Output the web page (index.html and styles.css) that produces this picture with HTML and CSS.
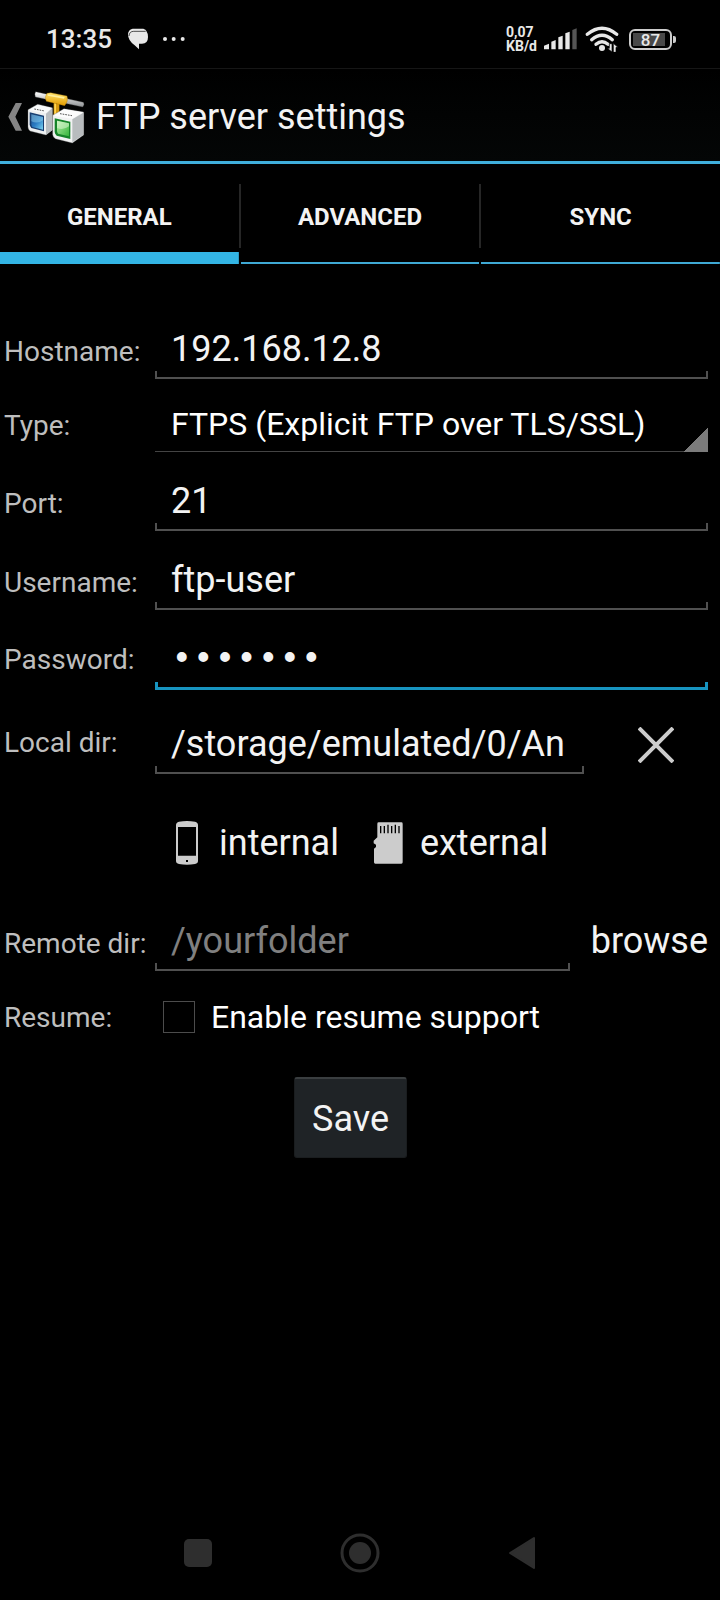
FILE: index.html
```html
<!DOCTYPE html>
<html lang="en">
<head>
<meta charset="utf-8">
<meta name="viewport" content="width=device-width, initial-scale=1">
<title>FTP server settings</title>
<link rel="stylesheet" href="styles.css">
</head>
<body>
<div class="statusbar">
  <span class="clock">13:35</span>
  <svg class="chat" viewBox="381 87 66 66" width="22" height="22" aria-hidden="true">
    <path fill="#e8e8e8" d="M398 89H430Q438 91 439 96Q444 103 444 114Q444 134 426 134H417V151L404 139Q384 125 384 106Q384 93 398 89Z"/>
    <path fill="none" stroke="#000" stroke-width="2" d="M387 111Q388 97 401 97H437"/>
  </svg>
  <svg class="more" viewBox="486 108 72 18" width="24" height="6" aria-hidden="true">
    <g fill="#e8e8e8"><circle cx="495" cy="117" r="6"/><circle cx="521" cy="117" r="6"/><circle cx="548" cy="117" r="6"/></g>
  </svg>
  <div class="speed"><span>0,07</span><span>KB/d</span></div>
  <svg class="signal" viewBox="187 84 102 66" width="34" height="22" aria-hidden="true">
    <g fill="#e8e8e8"><path d="M190 148V137L205 131V148Z"/><path d="M212 148V125L225 120V148Z"/><path d="M233 148V112L246 107V148Z"/><path d="M254 148V100L267 95V148Z"/></g>
    <path fill="#555" d="M275 148V90L288 85V148Z"/>
  </svg>
  <svg class="wifi" viewBox="313 78 102 78" width="34" height="26" aria-hidden="true">
    <g fill="none" stroke="#e8e8e8" stroke-width="10" stroke-linecap="round"><path d="M320 103Q364 67 408 103"/><path d="M333 119Q364 92 395 119"/><path d="M346 133Q364 118 382 133"/></g>
    <circle cx="364" cy="144" r="9" fill="#e8e8e8"/>
    <path fill="#e8e8e8" stroke="#000" stroke-width="2" d="M394 131V156L380 145H386V131ZM398 157V130L412 142H406V157Z"/>
  </svg>
  <span class="battery"><span class="battery-level">87</span></span>
</div>

<header class="actionbar">
  <button class="home" type="button" aria-label="Back">
    <svg viewBox="25 94 42 90" width="14" height="30" aria-hidden="true"><path fill="#858585" d="M48 97H67L47 138L67 180H48L26 138Z"/></svg>
    <svg viewBox="81 54 180 168" width="60" height="56" aria-hidden="true">
      <defs>
        <linearGradient id="gold" x1="0" y1="0" x2="0" y2="1"><stop offset="0" stop-color="#ffe36b"/><stop offset="1" stop-color="#e39b00"/></linearGradient>
        <linearGradient id="rod" x1="0" y1="0" x2="0" y2="1"><stop offset="0" stop-color="#fff"/><stop offset="1" stop-color="#8e9294"/></linearGradient>
        <linearGradient id="blue" x1="0" y1="0" x2="1" y2="1"><stop offset="0" stop-color="#1b4d8d"/><stop offset=".5" stop-color="#2b7cc4"/><stop offset="1" stop-color="#7ad2ef"/></linearGradient>
        <linearGradient id="green" x1="0" y1="0" x2="1" y2="1"><stop offset="0" stop-color="#b6eda8"/><stop offset="1" stop-color="#35b53a"/></linearGradient>
      </defs>
      <path fill="#d79a10" d="M161 96L178 99V134H161Z"/><path fill="#ffd450" d="M163 96H168V134H163Z"/>
      <path fill="url(#rod)" stroke="#444" d="M107 62Q102 69 106 78L248 108Q255 101 250 94Z"/>
      <path fill="url(#gold)" stroke="#9b6a00" d="M141 67Q132 79 139 91L194 104Q206 91 201 75L152 65Z"/>
      <path fill="#ffef9c" d="M145 70L194 78L192 83L143 74Z"/>
      <path fill="#eef0f1" stroke="#777" d="M84 116L113 100L157 110V177L138 192L90 180Q84 175 84 168Z"/>
      <path fill="#b9bdc0" d="M138 128L157 111V177L138 191Z"/>
      <path fill="#f9fafa" d="M87 117L113 102L155 111L137 127Z"/>
      <path fill="none" stroke="#555" stroke-width="3" stroke-dasharray="5 3" d="M103 114L134 120"/>
      <path fill="#183e70" d="M89 124L132 134V181L94 171Q89 165 89 160Z"/>
      <path fill="url(#blue)" d="M94 130L129 138V176L97 168Q94 164 94 160Z"/><path fill="#9ddcf2" opacity=".45" d="M94 130L129 138V148Q112 160 94 151Z"/>
      <path fill="#f2f3f3" stroke="#666" d="M158 133L192 113L251 123V192L217 216L166 203Q159 198 158 191Z"/>
      <path fill="#b8bcbe" d="M217 145L250 125V191L217 214Z"/>
      <path fill="#fcfcfc" d="M162 134L192 115L248 124L216 143Z"/>
      <path fill="none" stroke="#555" stroke-width="3" stroke-dasharray="5 3" d="M180 128L216 134"/>
      <path fill="#168429" d="M164 142L211 152V204L170 194Q164 188 164 183Z"/>
      <path fill="url(#green)" d="M171 149L207 157V196L174 188Q171 184 171 180Z"/><path fill="#e4fbdc" opacity=".5" d="M171 149L207 157V166Q190 179 171 171Z"/>
    </svg>
  </button>
  <h1 class="title">FTP server settings</h1>
</header>

<nav class="tabs" role="tablist">
  <button class="tab tab-active" type="button" role="tab" aria-selected="true">GENERAL</button>
  <button class="tab" type="button" role="tab" aria-selected="false">ADVANCED</button>
  <button class="tab" type="button" role="tab" aria-selected="false">SYNC</button>
</nav>

<form class="settings">
  <div class="row">
    <label class="label" for="host">Hostname:</label>
    <input class="field" id="host" type="text" value="192.168.12.8">
  </div>
  <div class="row">
    <label class="label" for="type">Type:</label>
    <select class="spinner" id="type"><option>FTPS (Explicit FTP over TLS/SSL)</option></select>
  </div>
  <div class="row">
    <label class="label" for="port">Port:</label>
    <input class="field" id="port" type="text" inputmode="numeric" value="21">
  </div>
  <div class="row">
    <label class="label" for="user">Username:</label>
    <input class="field" id="user" type="text" value="ftp-user">
  </div>
  <div class="row">
    <label class="label" for="pass">Password:</label>
    <input class="field field-active" id="pass" type="password" value="example">
  </div>
  <div class="row row-local">
    <label class="label" for="local">Local dir:</label>
    <div class="group">
      <input class="field" id="local" type="text" value="/storage/emulated/0/An">
      <button class="clear" type="button" aria-label="Clear">
        <svg viewBox="0 0 36 36" width="36" height="36" aria-hidden="true"><path stroke="#ccc" stroke-width="4" d="M1 1L35 35M35 1L1 35"/></svg>
      </button>
    </div>
  </div>
  <div class="storage">
    <button class="place" type="button">
      <svg viewBox="105 84 72 138" width="24" height="46" aria-hidden="true"><path fill="#ccc" fill-rule="evenodd" d="M117 89Q141 85 165 89Q174 91 174 99V207Q174 214 165 216Q141 220 117 216Q108 214 108 207V99Q108 91 117 89ZM114 105V191H168V105ZM138 204V210H144V204Z"/></svg>
      internal
    </button>
    <button class="place" type="button">
      <svg viewBox="699 84 90 138" width="30" height="46" aria-hidden="true"><path fill="#ccc" d="M716 91H784Q788 91 788 95V211Q788 215 784 215H706Q702 215 702 211V170L708 165V158L701 154V146L712 136V95Q712 91 716 91Z"/><path stroke="#000" stroke-width="4" d="M722 102V124M733 102V124M744 98V124M755 102V124M766 98V124M777 102V124"/></svg>
      external
    </button>
  </div>
  <div class="row">
    <label class="label" for="remote">Remote dir:</label>
    <div class="group group-remote">
      <input class="field" id="remote" type="text" placeholder="/yourfolder">
      <button class="browse" type="button">browse</button>
    </div>
  </div>
  <div class="row row-resume">
    <span class="label">Resume:</span>
    <label class="check"><input class="box" type="checkbox">Enable resume support</label>
  </div>
  <div class="actions"><button class="save" type="submit">Save</button></div>
</form>

<nav class="sysnav">
  <button class="sysbtn" type="button" aria-label="Recent apps"><svg viewBox="0 0 28 28" width="28" height="28"><rect width="28" height="28" rx="5" fill="#2e2e2e"/></svg></button>
  <button class="sysbtn" type="button" aria-label="Home"><svg viewBox="0 0 40 40" width="40" height="40"><circle cx="20" cy="20" r="18" fill="none" stroke="#2e2e2e" stroke-width="3"/><circle cx="20" cy="20" r="11" fill="#2e2e2e"/></svg></button>
  <button class="sysbtn" type="button" aria-label="Back"><svg viewBox="0 0 28 34" width="28" height="34"><path fill="#2e2e2e" stroke="#2e2e2e" stroke-width="2" stroke-linejoin="round" d="M2 17L26 2V32Z"/></svg></button>
</nav>
</body>
</html>
```
FILE: styles.css
```css
* { box-sizing: border-box; }

body {
  margin: 0;
  min-height: 100vh;
  display: flex;
  flex-direction: column;
  background: #000;
  color: #f3f3f3;
  font-family: Roboto, "Noto Sans", sans-serif;
}

button, input, select {
  margin: 0;
  padding: 0;
  border: 0;
  border-radius: 0;
  outline: 0;
  background: none;
  color: inherit;
  font: inherit;
  appearance: none;
}

svg { display: block; flex: none; }

/* Status bar */
.statusbar {
  display: flex;
  align-items: center;
  height: 69px;
  padding: 10px 48px 0 46px;
  border-bottom: 1px solid #161616;
  color: #e8e8e8;
}
.clock { font-size: 26px; line-height: 32px; font-weight: 500; }
.chat { margin-left: 15px; }
.more { margin-left: 13px; }
.speed {
  display: flex;
  flex-direction: column;
  margin-left: auto;
  font-size: 14px;
  line-height: 14px;
  font-weight: 700;
}
.signal { margin-left: 6px; }
.wifi { margin: 0 10px 0 8px; }
.battery {
  position: relative;
  width: 43px;
  height: 21px;
  padding: 2px;
  border: 2px solid #ccc;
  border-radius: 6px;
}
.battery::after {
  content: "";
  position: absolute;
  right: -6px;
  top: 5px;
  width: 3px;
  height: 7px;
  border-radius: 0 2px 2px 0;
  background: #ccc;
}
.battery-level {
  display: block;
  height: 13px;
  background: linear-gradient(90deg, #484848 32px, #000 32px);
  text-align: center;
  font-size: 17px;
  line-height: 14px;
  font-weight: 500;
}

/* Title bar */
.actionbar {
  display: flex;
  align-items: center;
  height: 95px;
  padding-top: 4px;
  border-bottom: 3px solid #40afdc;
  background: linear-gradient(#000, #040606);
}
.home { display: flex; align-items: center; gap: 5px; padding-left: 8px; }
.title { margin: 0 0 0 9px; font-size: 36px; line-height: 42px; font-weight: 400; }

/* Tabs */
.tabs { display: flex; gap: 2px; height: 100px; }
.tab {
  position: relative;
  flex: 1;
  padding-top: 6px;
  background: linear-gradient(#3fa9d4, #3fa9d4) bottom / 100% 2px no-repeat;
  font-size: 24px;
  font-weight: 700;
}
.tab-active { background: linear-gradient(#33b5e5, #33b5e5) bottom / 100% 12px no-repeat; }
.tab + .tab::before {
  content: "";
  position: absolute;
  left: -2px;
  top: 20px;
  width: 2px;
  height: 64px;
  background: #262626;
}

/* Form */
.settings {
  display: flex;
  flex-direction: column;
  gap: 20px;
  padding: 56px 12px 0 4px;
}
.row {
  display: grid;
  grid-template-columns: 151px minmax(0, 1fr);
  align-items: baseline;
}
.label { color: #bebebe; font-size: 28px; line-height: 33px; white-space: nowrap; }
.field {
  --line: #505050;
  --weight: 2px;
  width: 100%;
  min-width: 0;
  height: 59px;
  padding: 8px 16px 9px;
  background:
    linear-gradient(var(--line), var(--line)) left bottom / 100% var(--weight) no-repeat,
    linear-gradient(var(--line), var(--line)) left bottom / var(--weight) 8px no-repeat,
    linear-gradient(var(--line), var(--line)) right bottom / var(--weight) 8px no-repeat;
  font-size: 36px;
  line-height: 42px;
}
.field::placeholder { color: #808080; opacity: 1; }
.field-active {
  --line: #1794c0;
  --weight: 3px;
  height: 60px;
  font-family: "Liberation Mono", monospace;
}
.spinner {
  width: 100%;
  height: 53px;
  padding: 6px 16px 9px;
  background:
    linear-gradient(135deg, transparent 50%, #7b7b7b 50%) right bottom / 24px 24px no-repeat,
    linear-gradient(#444, #444) bottom / 100% 1px no-repeat;
  color: #fff;
  font-size: 32px;
  line-height: 38px;
}
.group { display: flex; min-width: 0; }
.row-local { align-items: center; min-height: 64px; }
.row-local .group { align-self: end; }
.clear { display: flex; flex: 0 0 124px; align-items: center; justify-content: center; padding-left: 20px; }
.storage { display: flex; align-items: center; gap: 34px; height: 98px; padding-left: 171px; }
.place { display: flex; align-items: center; gap: 20px; font-size: 36px; line-height: 42px; }
.place + .place { gap: 17px; }
.group-remote { align-items: baseline; gap: 21px; }
.browse { font-size: 36px; line-height: 42px; }
.row-resume { align-items: center; min-height: 52px; }
.check { display: flex; align-items: center; gap: 16px; padding-left: 8px; color: #fff; font-size: 32px; line-height: 38px; }
.box { width: 32px; height: 32px; border: 1px solid #4c4c4c; }
.box:checked { background: #33b5e5; }
.actions { display: flex; justify-content: center; padding: 14px 11px 0 0; }
.save {
  padding: 19px 17px 17px;
  border: 1px solid #1a1d1f;
  border-top: 2px solid #3a3e40;
  border-radius: 3px;
  background: #1f2326;
  font-size: 36px;
  line-height: 42px;
}

/* System navigation */
.sysnav { display: flex; justify-content: center; height: 94px; margin-top: auto; }
.sysbtn { display: flex; flex: 0 1 162px; align-items: center; justify-content: center; }
```
